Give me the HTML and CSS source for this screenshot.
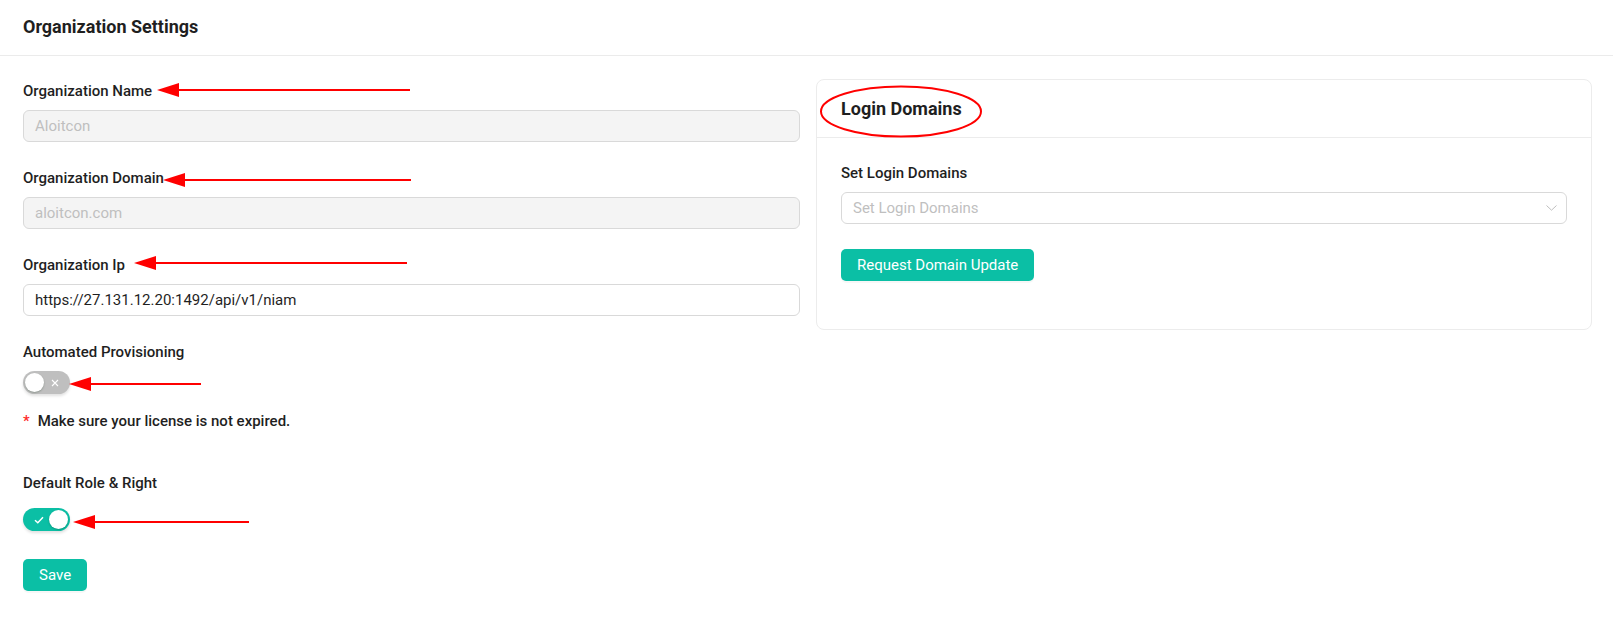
FILE: index.html
```html
<!DOCTYPE html>
<html>
<head>
<meta charset="utf-8">
<title>Organization Settings</title>
<link rel="stylesheet" href="styles.css">
</head>
<body>
<div class="page">
  <header class="page-header"><h1 class="page-title">Organization Settings</h1></header>
  <main class="content">
    <section class="col-left">
      <div class="field">
        <label class="label">Organization Name</label>
        <div class="input disabled">Aloitcon</div>
      </div>
      <div class="field">
        <label class="label">Organization Domain</label>
        <div class="input disabled">aloitcon.com</div>
      </div>
      <div class="field">
        <label class="label">Organization Ip</label>
        <div class="input">https://27.131.12.20:1492/api/v1/niam</div>
      </div>
      <div class="field switch-field">
        <label class="label">Automated Provisioning</label>
        <div class="switch off">
          <span class="knob"></span>
          <span class="switch-inner">
            <svg width="8" height="8" viewBox="0 0 8 8"><path d="M1 1L7 7M7 1L1 7" stroke="#fff" stroke-width="1.1" fill="none"/></svg>
          </span>
        </div>
      </div>
      <p class="note"><span class="star">*</span>Make sure your license is not expired.</p>
      <div class="field role">
        <label class="label">Default Role &amp; Right</label>
        <div class="switch on role-switch">
          <span class="switch-inner">
            <svg width="10" height="8" viewBox="0 0 10 8"><path d="M1 4.2L3.8 6.8L9 1.2" stroke="#fff" stroke-width="1.5" fill="none"/></svg>
          </span>
          <span class="knob"></span>
        </div>
      </div>
      <button class="btn">Save</button>
    </section>
    <section class="card">
      <div class="card-head"><h2 class="card-title">Login Domains</h2></div>
      <div class="card-body">
        <div class="field">
          <label class="label">Set Login Domains</label>
          <div class="select">
            <span class="placeholder">Set Login Domains</span>
            <svg class="chev" width="11" height="6" viewBox="0 0 11 6"><path d="M0.5 0.5L5.5 5.2L10.5 0.5" stroke="#bfbfbf" stroke-width="1" fill="none"/></svg>
          </div>
        </div>
        <button class="btn">Request Domain Update</button>
      </div>
    </section>
  </main>
  <svg class="annot" width="1613" height="621" viewBox="0 0 1613 621">
    <g stroke="#ff0000" stroke-width="2" fill="#ff0000">
      <line x1="176" y1="90" x2="410" y2="90"/>
      <polygon points="157,90 179,83 179,97" stroke="none"/>
      <line x1="182" y1="180" x2="411" y2="180"/>
      <polygon points="163,180 185,173 185,187" stroke="none"/>
      <line x1="153" y1="263" x2="407" y2="263"/>
      <polygon points="134,263 156,256 156,270" stroke="none"/>
      <line x1="88" y1="384" x2="201" y2="384"/>
      <polygon points="69,384 91,377 91,391" stroke="none"/>
      <line x1="92" y1="522" x2="249" y2="522"/>
      <polygon points="73,522 95,515 95,529" stroke="none"/>
      <ellipse cx="901" cy="111.5" rx="80" ry="25" fill="none"/>
    </g>
  </svg>
</div>
</body>
</html>
```
FILE: styles.css
```css
* { box-sizing: border-box; }
html, body { margin: 0; padding: 0; background: #fff; }
body {
  font-family: Roboto, "Liberation Sans", Arial, sans-serif;
  color: rgba(0,0,0,0.85);
  font-size: 14px;
}
.page { position: relative; width: 1613px; min-height: 621px; }
.page-header {
  height: 56px;
  border-bottom: 1px solid #ebebeb;
  padding: 0 23px;
  display: flex;
  align-items: center;
}
.page-title { margin: 0; font-size: 18px; font-weight: 700; color: #1f1f1f; line-height: 24px; position: relative; top: -1px; }
.content {
  display: grid;
  grid-template-columns: 777px 776px;
  gap: 16px;
  padding: 24px 21px 0 23px;
  align-items: start;
}
.field { margin-bottom: 25px; }
.label {
  display: block;
  font-size: 15px;
  font-weight: 500;
  line-height: 22px;
  margin-bottom: 8px;
  color: #1f1f1f;
}
.input {
  height: 32px;
  border: 1px solid #d9d9d9;
  border-radius: 6px;
  padding: 0 11px;
  display: flex;
  align-items: center;
  font-size: 15px;
  color: #1f1f1f;
}
.input.disabled { background: #f4f4f4; color: #bfbfbf; }
.switch-field { margin-bottom: 16px; }
.switch {
  width: 47px;
  height: 23px;
  border-radius: 12px;
  display: flex;
  align-items: center;
  padding: 0 2px;
  margin-top: 1px;
  box-shadow: 0 2px 3px rgba(0,0,0,0.12);
}
.switch.off { background: #bfbfbf; }
.switch.on { background: #0bbfa5; }
.knob {
  width: 19px; height: 19px; border-radius: 50%; background: #fff;
  box-shadow: 0 1px 2px rgba(0,35,11,0.25);
  flex: none;
}
.switch-inner { flex: 1; display: flex; align-items: center; justify-content: center; }
.switch.off .switch-inner { padding-right: 3px; }
.switch.on .switch-inner { padding-left: 3px; }
.note {
  margin: 0 0 40px 0;
  font-size: 15px;
  font-weight: 500;
  line-height: 22px;
  color: #1f1f1f;
}
.star { color: #ff2a2a; margin-right: 8px; font-weight: 500; }
.role { margin-bottom: 28px; }
.role-switch { margin-top: 14px; }
.btn {
  height: 32px;
  border: none;
  border-radius: 5px;
  background: #0bbfa5;
  color: #fff;
  font-family: inherit;
  font-size: 15px;
  font-weight: 400;
  padding: 0 16px;
  box-shadow: 0 2px 0 rgba(0,0,0,0.03);
}
.card {
  border: 1px solid #ececec;
  border-radius: 8px;
  margin-top: -1px;
}
.card-head {
  height: 58px;
  border-bottom: 1px solid #ececec;
  display: flex; align-items: center;
  padding: 0 24px;
}
.card-title { margin: 0; font-size: 18px; font-weight: 700; color: #1f1f1f; line-height: 24px; }
.card-body { padding: 24px 24px 48px; }
.select {
  height: 32px;
  border: 1px solid #d9d9d9;
  border-radius: 6px;
  padding: 0 11px;
  display: flex; align-items: center; justify-content: space-between;
  font-size: 15px;
}
.placeholder { color: #bfbfbf; }
.chev { margin-right: -2px; }
.annot { position: absolute; left: 0; top: 0; pointer-events: none; }
```
